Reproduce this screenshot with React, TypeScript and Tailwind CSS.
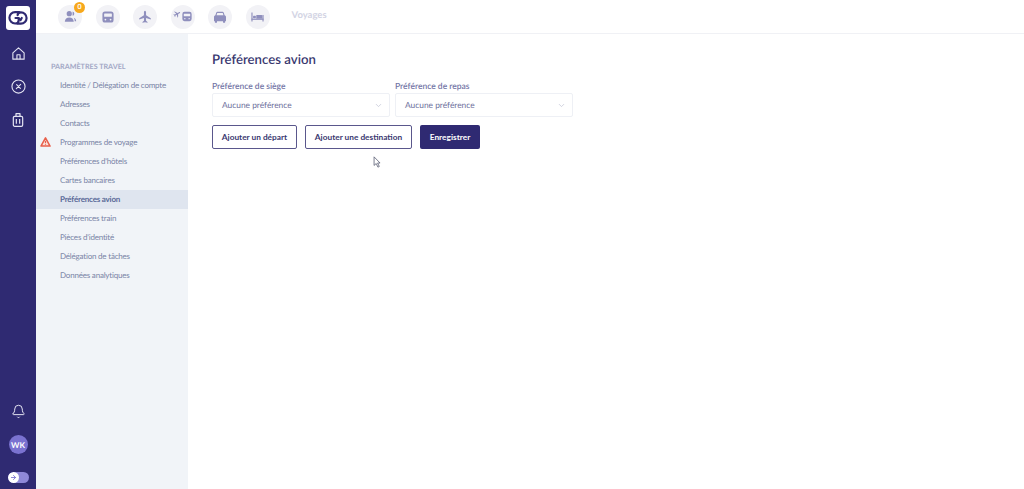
import React from 'react';
import { ArrowRight, Bell, ChevronDown } from 'lucide-react';

const menuItems = [
  'Identité / Délégation de compte',
  'Adresses',
  'Contacts',
  'Programmes de voyage',
  "Préférences d'hôtels",
  'Cartes bancaires',
  'Préférences avion',
  'Préférences train',
  "Pièces d'identité",
  'Délégation de tâches',
  'Données analytiques',
];

const ICON = '#8f8fbd';
const RAIL_ICON = '#e4e4f2';

// Logo: two interlocking hooks
const Logo = () => (
  <svg viewBox="0 0 24 24" className="h-[20px] w-[20px]" fill="none" stroke="#2f2a72" strokeWidth="2.6" strokeLinecap="round" strokeLinejoin="round">
    <path d="M13.500 5H8.500a6.800 6.800 0 0 0 0 13.600c3 0 4.300-1.800 4.300-4v-2.600H9" />
    <path d="M11.500 18.800h4a6.800 6.800 0 0 0 0-13.600c-2.300 0-3.800 1.200-4 3.300" />
    <path d="M16.500 12l-1.500 2.500M13 12.500l2 2" />
  </svg>
);

const HomeIcon = () => (
  <svg viewBox="0 0 24 24" className="h-[15px] w-[15px]" fill="none" stroke={RAIL_ICON} strokeWidth="1.800" strokeLinejoin="round">
    <path d="M3 11l9-8 9 8v10H3z" />
    <path d="M9.500 21v-7h5v7" />
  </svg>
);

const CompassIcon = () => (
  <svg viewBox="0 0 24 24" className="h-[15px] w-[15px]" fill="none" stroke={RAIL_ICON} strokeWidth="1.800" strokeLinecap="round">
    <circle cx="12" cy="12" r="10.500" />
    <path d="M9 9l6 6M15.500 8.500L8.500 15.500" />
  </svg>
);

const SuitcaseIcon = () => (
  <svg viewBox="0 0 24 24" className="h-[16px] w-[16px]" fill="none" stroke={RAIL_ICON} strokeWidth="1.800" strokeLinejoin="round">
    <rect x="5" y="6.500" width="14" height="15" rx="2" />
    <path d="M9 6.500V2.500h6v4M9.500 10.500v7M14.500 10.500v7" />
  </svg>
);

const UsersIcon = () => (
  <svg viewBox="0 0 16 16" className="h-[13px] w-[13px]" fill={ICON}>
    <circle cx="6.500" cy="4.500" r="3.200" />
    <path d="M1 14.500c0-3.400 2.400-5.300 5.500-5.300s5.500 1.900 5.500 5.300z" />
    <path d="M10.600 1.800a2.800 2.800 0 0 1 0 5.400zM12 9.400c1.800.6 3 2.200 3 4.400h-1.800c0-1.800-.4-3.200-1.200-4.400z" />
  </svg>
);

const TrainIcon = ({ size = 'h-[12px] w-[12px]' }: { size?: string }) => (
  <svg viewBox="0 0 14 14" className={size}>
    <rect x="0.500" y="0.500" width="13" height="13" rx="3" fill={ICON} />
    <rect x="2.500" y="3" width="9" height="3.800" rx="0.600" fill="#f2f2f6" />
    <circle cx="4" cy="10" r="1" fill="#f2f2f6" />
    <circle cx="10" cy="10" r="1" fill="#f2f2f6" />
  </svg>
);

const PLANE_D =
  'M8 .8c.7 0 1.200.9 1.200 1.900V6l5.400 3.300v1.500L9.200 9.100v3.200l1.700 1.300v1.100L8 14l-2.900.7v-1.100l1.700-1.300V9.100l-5.400 1.700V9.300L6.800 6V2.700C6.800 1.700 7.300.8 8 .8z';

const PlaneIcon = () => (
  <svg viewBox="0 0 16 16" className="h-[14px] w-[14px]" fill={ICON}>
    <path d={PLANE_D} />
  </svg>
);

const PlaneTrainIcon = () => (
  <span className="flex items-center gap-[1px]">
    <svg viewBox="0 0 16 16" className="mb-[5px] h-[8px] w-[8px] rotate-[60deg]" fill={ICON}>
      <path d={PLANE_D} />
    </svg>
    <TrainIcon size="h-[11px] w-[10px]" />
  </span>
);

const CarIcon = () => (
  <svg viewBox="0 0 16 14" className="h-[12px] w-[14px]">
    <path
      d="M2.600 5l1-3C3.800 1.300 4.400 1 5 1h6c.6 0 1.200.3 1.400 1l1 3c.9.3 1.600 1 1.600 2v4.500c0 .3-.2.5-.5.5H14v1a.8.8 0 0 1-.8.8h-.9a.8.8 0 0 1-.8-.8v-1H4.500v1a.8.8 0 0 1-.8.8h-.9a.8.8 0 0 1-.8-.8v-1h-.5c-.3 0-.5-.2-.5-.5V7c0-1 .7-1.700 1.600-2z"
      fill={ICON}
    />
    <path d="M4 5l.8-2.600h6.400L12 5z" fill="#f2f2f6" />
  </svg>
);

const BedIcon = () => (
  <svg viewBox="0 0 16 12" className="h-[10px] w-[13px]" fill={ICON}>
    <rect x="0.500" y="0.500" width="1.400" height="11" />
    <rect x="14.100" y="3.500" width="1.400" height="8" />
    <rect x="0.500" y="8" width="15" height="1.500" />
    <rect x="2.500" y="4.500" width="3.500" height="3" rx="0.800" />
    <path d="M6.500 3.500h6.500c.6 0 1 .4 1 1V8H6.500z" />
  </svg>
);

const TopIcon = ({ children }: { children: React.ReactNode }) => (
  <div className="relative flex h-6 w-6 shrink-0 items-center justify-center rounded-full bg-[#f2f2f6]">
    {children}
  </div>
);

const FieldSelect = ({ label }: { label: string }) => (
  <div className="w-[178px]">
    <label className="block text-[8.5px] font-semibold leading-[13px] text-[#7476a6]">{label}</label>
    <div className="flex h-[24px] items-center justify-between rounded-[2px] border border-[#eef0f5] bg-white pl-[9px] pr-[6px]">
      <span className="text-[8.4px] text-[#6d6f9c]">Aucune préférence</span>
      <ChevronDown className="h-[9px] w-[9px] text-[#c3c6d6]" />
    </div>
  </div>
);

export default function App() {
  return (
    <div className="flex h-[489px] w-[1024px] overflow-hidden bg-white font-['Lato',sans-serif] [text-rendering:geometricPrecision]">
      {/* Rail */}
      <aside className="flex w-[36px] shrink-0 flex-col items-center bg-[#2f2a72] pb-[6px] pt-[6px]">
        <div className="flex h-6 w-6 items-center justify-center rounded-[3px] bg-white">
          <Logo />
        </div>
        <div className="mt-[16px] flex flex-col items-center gap-[18px]">
          <HomeIcon />
          <CompassIcon />
          <SuitcaseIcon />
        </div>
        <div className="mt-auto flex flex-col items-center">
          <Bell className="h-[15px] w-[15px] text-[#e4e4f2]" strokeWidth={1.6} />
          <div className="mt-[16px] flex h-[19px] w-[19px] items-center justify-center rounded-full bg-[#7a72d0] text-[8px] font-bold text-white">
            WK
          </div>
          <div className="relative mt-[18px] flex h-[11px] w-[21px] items-center overflow-hidden rounded-full bg-[#8f88d8]">
            <div className="flex h-[11px] w-[11px] items-center justify-center rounded-full bg-white">
              <ArrowRight className="h-[7px] w-[7px] text-[#7a72d0]" strokeWidth={3} />
            </div>
          </div>
        </div>
      </aside>

      <div className="flex min-w-0 flex-1 flex-col">
        {/* Top bar */}
        <header className="flex h-[34px] shrink-0 items-center gap-[13.6px] border-b border-[#f0f1f5] bg-white pl-[22px]">
          <TopIcon>
            <UsersIcon />
            <span className="absolute -right-[3px] -top-[3px] flex h-[11px] w-[11px] items-center justify-center rounded-full bg-[#f7a81b] text-[7px] font-bold text-white">
              0
            </span>
          </TopIcon>
          <TopIcon>
            <TrainIcon />
          </TopIcon>
          <TopIcon>
            <PlaneIcon />
          </TopIcon>
          <TopIcon>
            <PlaneTrainIcon />
          </TopIcon>
          <TopIcon>
            <CarIcon />
          </TopIcon>
          <TopIcon>
            <BedIcon />
          </TopIcon>
          <span className="ml-[8px] text-[9.5px] font-bold text-[#d3d4e4]">Voyages</span>
        </header>

        <div className="flex min-h-0 flex-1">
          {/* Settings menu */}
          <nav className="w-[152px] shrink-0 bg-[#f1f4f8] pt-[28px]">
            <div className="pl-[15px] text-[7.2px] font-bold leading-[10px] text-[#a3a8c6]">PARAMÈTRES TRAVEL</div>
            <ul className="mt-[4px]">
              {menuItems.map((item) => (
                <li
                  key={item}
                  className={`relative flex h-[19px] items-center pb-[1px] pl-[24px] text-[8px] tracking-[-0.2px] ${
                    item === 'Préférences avion'
                      ? 'bg-[#dfe5ef] font-bold text-[#5a6a98]'
                      : 'text-[#7a84a6]'
                  }`}
                >
                  {item === 'Programmes de voyage' && (
                    <svg viewBox="0 0 12 11" className="absolute left-[4px] top-[4px] h-[10px] w-[11px]">
                      <path d="M6 1l5 9H1z" fill="#fbe3de" stroke="#e8604c" strokeWidth="1.700" strokeLinejoin="round" />
                      <path d="M6 4v2.500M6 7.500v1" stroke="#e8604c" strokeWidth="1.300" />
                    </svg>
                  )}
                  {item}
                </li>
              ))}
            </ul>
          </nav>

          {/* Main content */}
          <main className="relative flex-1 pl-[24px] pt-[16px]">
            <h1 className="text-[13.2px] font-semibold leading-[18px] text-[#39386f]">Préférences avion</h1>
            <div className="mt-[12px] flex gap-[5px]">
              <FieldSelect label="Préférence de siège" />
              <FieldSelect label="Préférence de repas" />
            </div>
            <div className="mt-[8px] flex gap-[8px]">
              <button className="h-[24px] w-[85px] rounded-[2px] border border-[#5a578c] bg-white text-[8.3px] font-bold text-[#39386f]">
                Ajouter un départ
              </button>
              <button className="h-[24px] w-[107px] rounded-[2px] border border-[#5a578c] bg-white text-[8.3px] font-bold text-[#39386f]">
                Ajouter une destination
              </button>
              <button className="h-[24px] w-[60px] rounded-[2px] bg-[#2f2a72] text-[8.3px] font-bold text-white">
                Enregistrer
              </button>
            </div>
            {/* Mouse cursor */}
            <svg viewBox="0 0 10 14" className="absolute left-[185px] top-[122px] h-[12px] w-[9px]">
              <path d="M1 1v10l2.500-2.200L5.500 13l1.600-.8-2-4H8z" fill="white" stroke="#55586f" strokeWidth="0.900" />
            </svg>
          </main>
        </div>
      </div>
    </div>
  );
}
